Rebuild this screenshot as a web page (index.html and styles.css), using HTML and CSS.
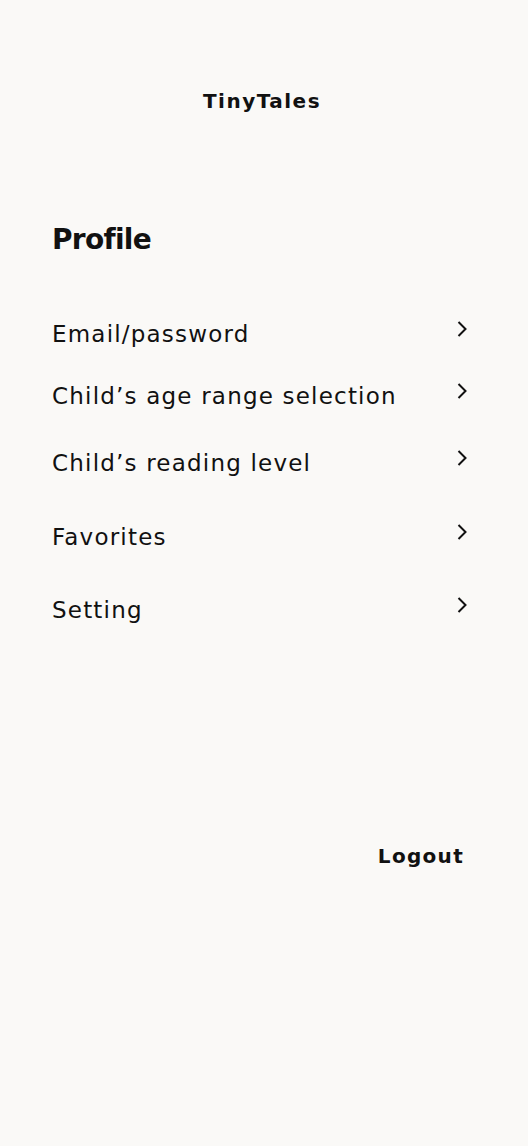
FILE: index.html
```html
<!DOCTYPE html>
<html lang="en">
<head>
    <meta charset="UTF-8">
    <meta name="viewport" content="width=device-width, initial-scale=1.0">
    <title>TinyTales - Profile</title>
    <link rel="stylesheet" href="styles.css">
</head>
<body>
    <div class="page">
        <header class="topbar">TinyTales</header>

        <h1 class="title">Profile</h1>

        <ul class="menu">
            <li class="menu-item">
                <span>Email/password</span>
                <svg class="chevron" viewBox="0 0 12 18"><path d="M2.5 2l7 7-7 7"/></svg>
            </li>
            <li class="menu-item">
                <span>Child’s age range selection</span>
                <svg class="chevron" viewBox="0 0 12 18"><path d="M2.5 2l7 7-7 7"/></svg>
            </li>
            <li class="menu-item">
                <span>Child’s reading level</span>
                <svg class="chevron" viewBox="0 0 12 18"><path d="M2.5 2l7 7-7 7"/></svg>
            </li>
            <li class="menu-item">
                <span>Favorites</span>
                <svg class="chevron" viewBox="0 0 12 18"><path d="M2.5 2l7 7-7 7"/></svg>
            </li>
            <li class="menu-item">
                <span>Setting</span>
                <svg class="chevron" viewBox="0 0 12 18"><path d="M2.5 2l7 7-7 7"/></svg>
            </li>
        </ul>

        <div class="logout">
            <button class="logout-btn">Logout</button>
        </div>
    </div>
</body>
</html>
```

FILE: styles.css
```css
html, body {
    margin: 0;
    padding: 0;
}
body {
    font-family: "DejaVu Sans", "Liberation Sans", sans-serif;
    background-color: #faf9f7;
    color: #111;
    min-height: 1146px;
}
.page {
    padding: 0 60px 0 52px;
}
.topbar {
    margin-top: 89px;
    text-align: center;
    font-size: 20px;
    font-weight: 700;
    line-height: 24px;
    letter-spacing: 1.5px;
    padding-left: 4px;
}
.title {
    margin: 109px 0 0;
    font-size: 28px;
    font-weight: 700;
    line-height: 36px;
    letter-spacing: -0.7px;
}
.menu {
    list-style: none;
    margin: 61px 0 0;
    padding: 0;
}
.menu-item {
    display: flex;
    justify-content: space-between;
    align-items: flex-start;
    font-size: 23px;
    line-height: 30px;
    letter-spacing: 1.2px;
}
.menu-item:nth-child(2) { margin-top: 32px; }
.menu-item:nth-child(3) { margin-top: 37px; }
.menu-item:nth-child(4) { margin-top: 44px; }
.menu-item:nth-child(5) { margin-top: 43px; }
.chevron {
    width: 12px;
    height: 18px;
    margin-top: 1px;
    fill: none;
    stroke: #111;
    stroke-width: 2;
}
.logout {
    margin-top: 216px;
    display: flex;
    justify-content: flex-end;
    padding-right: 4px;
}
.logout-btn {
    background: none;
    border: none;
    padding: 0;
    font-family: inherit;
    font-size: 20px;
    font-weight: 700;
    line-height: 30px;
    letter-spacing: 1.3px;
    color: #111;
    cursor: pointer;
}
```
